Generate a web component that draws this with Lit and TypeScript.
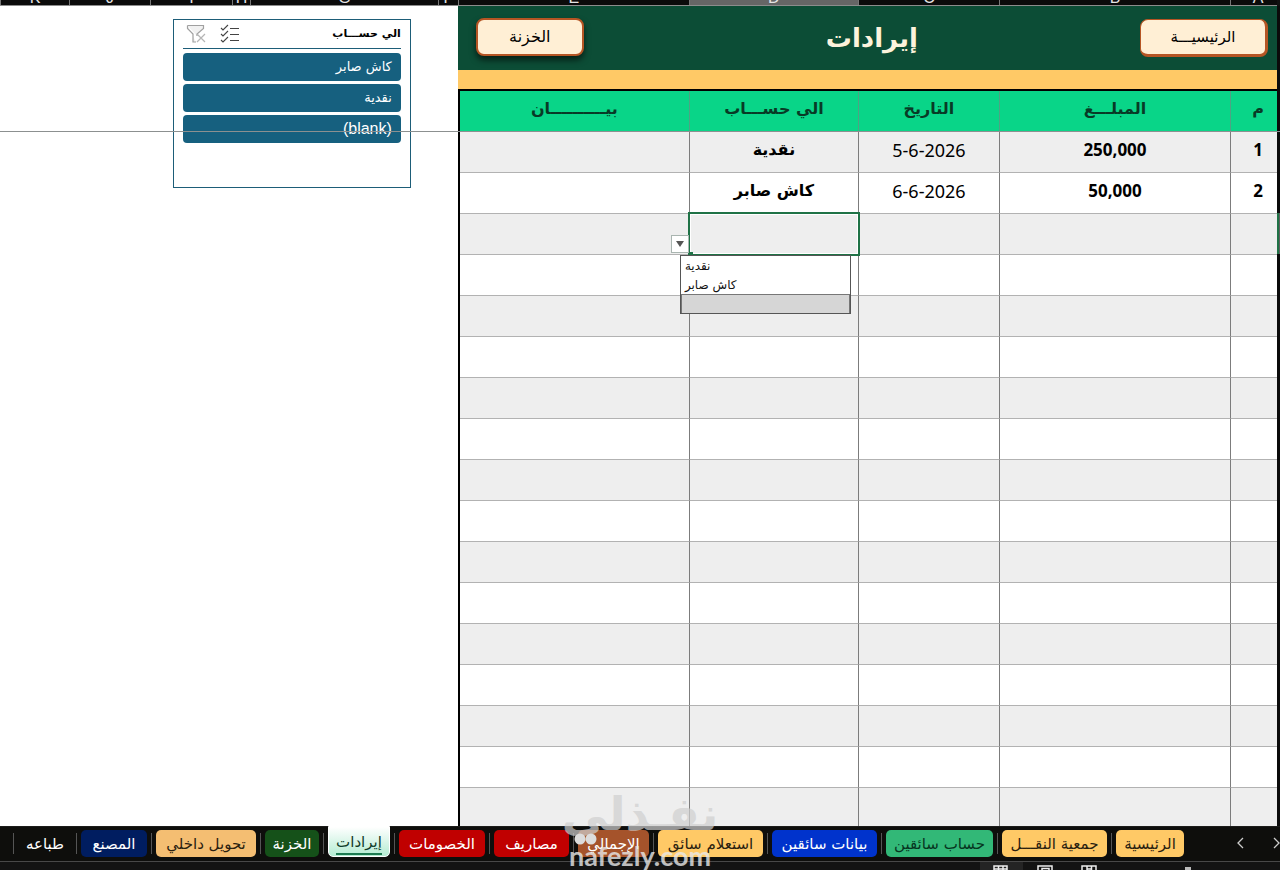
import { LitElement, html, css } from "lit";
import { customElement } from "lit/decorators.js";

interface Row { n: string; amount: string; date: string; account: string; note: string }

const ROWS: Row[] = [
  { n: "1", amount: "250,000", date: "5-6-2026", account: "نقدية", note: "" },
  { n: "2", amount: "50,000", date: "6-6-2026", account: "كاش صابر", note: "" },
];
const BLANK_ROWS = Array.from({ length: 15 }, (_, i) => i);
const TABS: [string, string][] = [
  ["الرئيسية", "amber"], ["جمعية النقـــل", "amber"], ["حساب سائقين", "mint"],
  ["بيانات سائقين", "blue"], ["استعلام سائق", "amber"], ["الإجمالي", "brown"],
  ["مصاريف", "red"], ["الخصومات", "red"], ["إيرادات", "active"],
  ["الخزنة", "green"], ["تحويل داخلي", "sand"], ["المصنع", "navy"], ["طباعه", "plain"],
];

@customElement("app-root")
export class AppRoot extends LitElement {
  static styles = css`
    :host { display: flex; flex-direction: column; height: 100vh; overflow: hidden; position: relative; direction: rtl; background: #fff; color: #000; font-family: "DejaVu Sans", "Noto Sans", sans-serif; }
    * { box-sizing: border-box; }
    button { font: inherit; color: inherit; border: 0; padding: 0; margin: 0; background: none; cursor: pointer; }
    .work { flex: 1; min-height: 0; display: flex; overflow: hidden; position: relative; }
    .gutter { flex: 0 0 3px; background: #0b0b0b; border-top: 6px solid #111; }
    .gutter-mark { margin-top: 207px; height: 41px; background: #5e5e5e; border-left: 2px solid #1f7246; }
    .sheet { flex: 0 0 64%; }
    .side { flex: 1; min-width: 0; }
    .letters { display: grid; height: 6px; background: #0b0b0b; border-bottom: 1px solid #8c8c8c; overflow: hidden; color: #e4e4e4; font: 16px/16px "Liberation Sans", sans-serif; }
    .letters span { border-left: 1px solid #777; height: 6px; display: flex; align-items: flex-end; justify-content: center; }
    .letters .current { background: #666; }
    .sheet .letters { grid-template-columns: 47fr 231fr 141fr 169fr 231fr; }
    .sheet .letters span:first-child { padding-left: 8px; }
    .side .letters { grid-template-columns: 20fr 188fr 18fr 82fr 81fr 69fr; }
    .banner { display: grid; grid-template-columns: 1fr auto 1fr; align-items: center; height: 64px; padding: 0 9px 0 18px; background: #0c4d36; }
    .banner h1 { margin: 0; color: #fdf3dc; font-size: 26px; line-height: 40px; font-weight: 700; }
    .nav { height: 38px; border: 2px solid #b55524; border-radius: 8px; background: #ffefd5; font-size: 16px; line-height: 30px; }
    .nav.home { width: 128px; border-width: 1px 3px 3px 1px; justify-self: start; font-size: 15px; }
    .nav.safe { width: 108px; justify-self: end; box-shadow: 0 4px 6px #0009; margin-bottom: 2px; }
    .band { height: 19px; background: #ffc966; }
    table { width: 100%; table-layout: fixed; border-collapse: separate; border-spacing: 0; border-top: 2px solid #000; border-left: 2px solid #000; }
    col.c-n { width: 47px; } col.c-amount { width: 231px; } col.c-date { width: 141px; } col.c-account { width: 169px; } col.c-note { width: 229px; }
    th, td { height: 41px; padding: 0 0 4px; text-align: center; border-bottom: 1px solid #b2b2b2; border-left: 1px solid #7c7c7c; line-height: 24px; }
    th:first-child, td:first-child { padding-left: 8px; }
    th:last-child, td:last-child { border-left: 0; }
    th { background: #09d588; color: #083a26; font-size: 16px; border-left-color: #4fa284; }
    td { font: 18px/24px "Noto Sans", "DejaVu Sans", sans-serif; }
    td.strong { font-weight: 700; font-size: 17px; }
    td.account { font: 700 16px/24px "DejaVu Sans", sans-serif; }
    tbody tr:nth-child(odd) { background: #eee; }
    .picker { position: relative; }
    .cursor { position: absolute; inset: -2px -2px -2px -2px; border: 2px solid #1f7246; box-shadow: inset 0 0 0 1px #fff; }
    .cursor::after { content: ""; position: absolute; left: -2px; bottom: -2px; width: 5px; height: 4px; background: #1f7246; }
    .arrow { position: absolute; right: 100%; margin-right: 1px; bottom: 1px; width: 18px; height: 18px; border: 1px solid #a9b5b0; background: #fff; display: grid; place-items: center; }
    .choices { position: absolute; z-index: 2; left: -10px; right: 7px; top: 41px; height: 59px; width: auto; border: 1px solid #555; border-radius: 0; padding: 0; margin: 0; background: #fff; overflow: hidden; direction: ltr; outline: 0; font: 12px/19px "DejaVu Sans", sans-serif; color: #111; }
    .choices option { padding: 3px 4px 0; height: 19px; min-height: 19px; line-height: 16px; text-align: left; }
    .choices .empty { height: 20px; background: #d6d6d6; border: 1px solid #777; }
    .freeze { position: absolute; left: 0; right: 0; top: 131px; border-top: 1px solid #8c9090; pointer-events: none; }
    .slicer { width: 238px; height: 169px; margin: 13px 47px 0 0; padding: 0 9px; border: 1px solid #1d5d78; background: #fff; }
    .slicer header { display: flex; align-items: center; gap: 14px; height: 29px; padding-left: 3px; border-bottom: 1px solid #1d5d78; margin-bottom: 4px; }
    .slicer h2 { flex: 1; margin: 0; font-size: 11px; line-height: 20px; font-weight: 700; }
    .slicer svg, .arrow svg { display: block; }
    .slicer .item { display: block; width: 100%; height: 28px; margin-bottom: 3px; padding: 0 9px; border-radius: 4px; background: #16607f; color: #fff; text-align: right; font-size: 13px; line-height: 26px; }
    .slicer .latin { font: 16px/28px "Liberation Sans", sans-serif; direction: ltr; }
    .tabs { flex: 0 0 36px; display: grid; grid-template-columns: 68px 105px 107px 105px 105px 71px 75px 86px 62px 54px 100px 66px 54px; column-gap: 9px; padding-right: 96px; background: #0e0e0c; border-bottom: 1px solid #484848; border-top: 1px solid #1c1c1a; position: relative; }
    .tab { position: relative; height: 27px; margin-top: 3px; border-radius: 5px; font-size: 15px; line-height: 25px; white-space: nowrap; padding-top: 1px; }
    .tab::after { content: ""; position: absolute; left: -5px; top: 3px; height: 21px; border-left: 1px solid #555; }
    .amber { background: #ffc966; color: #2a2110; } .sand { background: #f4be72; color: #2a2110; }
    .mint { background: #32b877; color: #06351f; } .blue { background: #0033cc; color: #fff; }
    .brown { background: #a5532b; color: #fff; } .red { background: #c00000; color: #fff; }
    .green { background: #155119; color: #fff; } .navy { background: #001d60; color: #fff; }
    .plain { color: #fff; }
    .active { margin-top: -1px; height: 31px; border-radius: 0 0 5px 5px; background: linear-gradient(#fff, #b4ecd2); border: 1px solid #fff; color: #123c2a; padding: 0; }
    .active span { border-bottom: 2px solid #1c7a50; display: block; margin: 0 7px; line-height: 27px; height: 26px; }
    .active::after { top: 6px; left: -6px; }
    .scroll { position: absolute; right: 0; top: 8px; display: flex; gap: 27px; direction: ltr; }
    .status { flex: 0 0 8px; background: #131313; overflow: hidden; display: flex; direction: ltr; justify-content: flex-end; }
    .status svg { display: block; flex: none; }
    .mark { position: absolute; left: 0; right: 0; bottom: -1px; display: flex; flex-direction: column; align-items: center; pointer-events: none; direction: ltr; white-space: nowrap; }
    .mark p { margin: 0; color: #e8e8e8; font: 700 27px/30px Lato, sans-serif; opacity: .8; }
    .mark .ar { color: #cfcfcf; font: 700 46px/46px "DejaVu Sans", sans-serif; direction: rtl; opacity: .7; margin-bottom: 4px; }
    .mark svg { position: absolute; left: 50%; margin-left: -67px; bottom: 25px; }
  `;

  private letters(list: string[], current = "") {
    return html`<div class="letters" aria-hidden="true">${list.map((l) => html`<span class=${l === current ? "current" : ""}>${l}</span>`)}</div>`;
  }

  private blankRow(i: number) {
    return html`<tr><td></td><td></td><td></td>
      <td class=${i === 0 ? "picker" : ""}>${i === 0 ? html`
        <div class="cursor"></div>
        <button class="arrow" aria-label="فتح القائمة"><svg width="10" height="6" viewBox="0 0 10 6"><path d="M1 0h8L5 6z" fill="#555"/></svg></button>
        <select class="choices" size="3" aria-label="الي حساب">
          <option>نقدية</option><option>كاش صابر</option><option class="empty" aria-label="فارغ"></option>
        </select>` : ""}</td><td></td></tr>`;
  }

  render() {
    return html`
      <main class="work">
        <div class="gutter"><div class="gutter-mark"></div></div>
        <section class="sheet">
          ${this.letters(["A", "B", "C", "D", "E"], "D")}
          <div class="banner">
            <button class="nav home">الرئيسيـــة</button>
            <h1>إيرادات</h1>
            <button class="nav safe">الخزنة</button>
          </div>
          <div class="band"></div>
          <table>
            <colgroup><col class="c-n"><col class="c-amount"><col class="c-date"><col class="c-account"><col class="c-note"></colgroup>
            <thead><tr><th>م</th><th>المبلـــغ</th><th>التاريخ</th><th>الي حســـاب</th><th>بيــــــــــان</th></tr></thead>
            <tbody>
              ${ROWS.map((r) => html`<tr><td class="strong">${r.n}</td><td class="strong">${r.amount}</td><td>${r.date}</td><td class="account">${r.account}</td><td>${r.note}</td></tr>`)}
              ${BLANK_ROWS.map((i) => this.blankRow(i))}
            </tbody>
          </table>
        </section>
        <aside class="side">
          ${this.letters(["F", "G", "H", "I", "J", "K"])}
          <section class="slicer">
            <header>
              <h2>الي حســـاب</h2>
              <button aria-label="تحديد متعدد"><svg width="20" height="20" viewBox="0 0 20 20" fill="none" stroke="#444" stroke-width="1.1"><path d="M1 4l2 2 5-5M1 10l2 2 5-5M1 16l2 2 5-5M10 4.500h9M10 10.500h9M10 16.500h9"/></svg></button>
              <button aria-label="مسح التصفية"><svg width="20" height="20" viewBox="0 0 20 20" fill="none" stroke="#a0a0a0" stroke-width="1.2"><path d="M1.500 1.500h16v3L11 10v2M1.500 1.500v3L7 10v8h3" fill="#f1f1f1"/><path d="M11 10l8 8M19 10l-8 8" stroke="#b5b5b5"/></svg></button>
            </header>
            <button class="item">كاش صابر</button>
            <button class="item">نقدية</button>
            <button class="item latin">(blank)</button>
          </section>
        </aside>
        <div class="freeze"></div>
      </main>
      <nav class="tabs">
        ${TABS.map(([t, c]) => html`<button class="tab ${c}"><span>${t}</span></button>`)}
        <div class="scroll">
          <button aria-label="السابق"><svg width="9" height="14" viewBox="0 0 9 14" fill="none" stroke="#ccc" stroke-width="1.300"><path d="M7 2L2 7l5 5"/></svg></button>
          <button aria-label="التالي"><svg width="8" height="14" viewBox="0 0 8 14" fill="none" stroke="#ccc" stroke-width="1.300"><path d="M2 2l5 5-5 5"/></svg></button>
        </div>
      </nav>
      <footer class="status">
        <svg width="300" height="8" viewBox="0 0 300 8" fill="none" stroke="#eee" stroke-width="1.500">
          <path d="M0 0h43v8H0z" fill="#242424" stroke="none"/>
          <path d="M14 8V4h13v4M14 7h13M18.500 4v4M23 4v4M58 8V4h14v4M62 8V6.500h7v2M102 8V4h14v4M107 4v4M111.500 4v4M107 7h5"/>
          <path d="M205 5h6v3h-6z" fill="#bbb" stroke="none"/>
        </svg>
      </footer>
      <div class="mark" aria-hidden="true">
        <p class="ar">نفـذلي</p><p>nafezly.com</p>
        <svg width="24" height="14" viewBox="0 0 24 14" fill="#dcdcdc"><circle cx="7" cy="7" r="5.500"/><circle cx="18" cy="7" r="5.500"/></svg>
      </div>
    `;
  }
}
